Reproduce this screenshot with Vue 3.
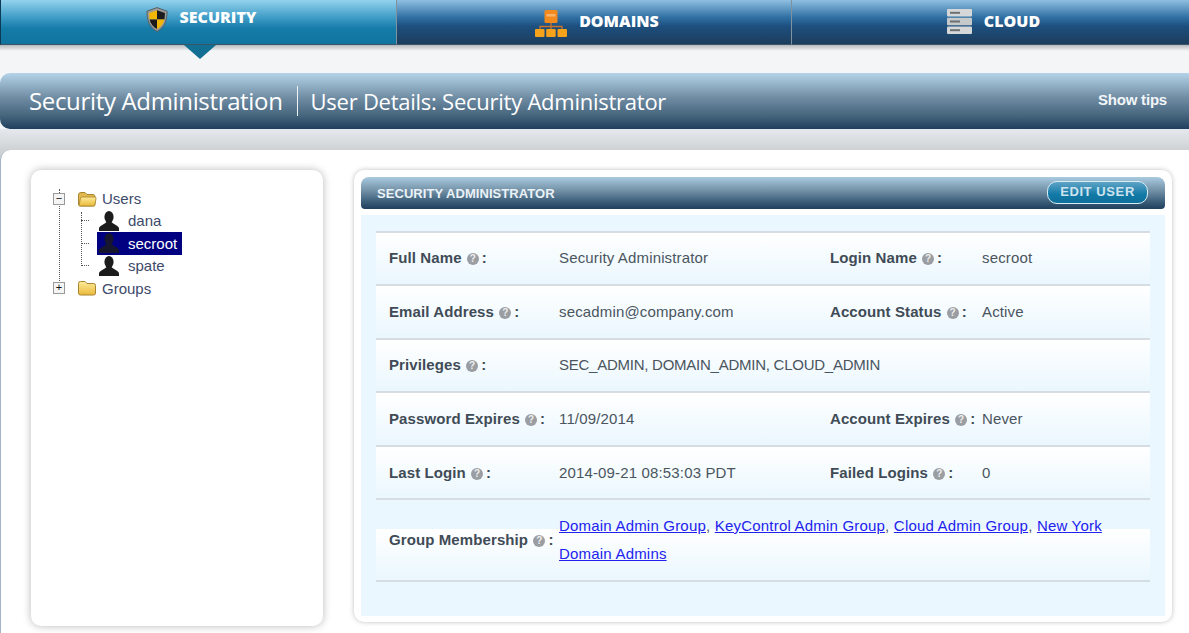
<template>
  <div class="page">
    <div class="tabs">
      <div v-for="tab in tabs" :key="tab.name" class="tab" :class="{ active: tab.active }">
        <svg v-if="tab.name === 'SECURITY'" class="tab-icon shield" viewBox="0 0 24 28">
          <path d="M12 1 L23 5 C23 15 20 23 12 27 C4 23 1 15 1 5 Z" fill="#9a9c9a" stroke="#55585a" stroke-width="1" />
          <path d="M12 4 L12 14 L4 14 C3.500 11 3.400 8.500 3.400 6.800 Z" fill="#f2b705" />
          <path d="M12 4 L20.600 6.800 C20.600 8.500 20.500 11 20 14 L12 14 Z" fill="#1b1b1b" />
          <path d="M4 14 L12 14 L12 24.400 C7.600 22 5 18.500 4 14 Z" fill="#1b1b1b" />
          <path d="M12 14 L20 14 C19 18.500 16.400 22 12 24.400 Z" fill="#f2b705" />
        </svg>
        <svg v-else-if="tab.name === 'DOMAINS'" class="tab-icon domains" viewBox="0 0 32 27">
          <rect x="9.500" y="0" width="13" height="13" rx="1.500" fill="#f28a1e" />
          <rect x="11.500" y="4" width="9" height="2.500" fill="#f9b26a" />
          <path d="M16 13 V19 M5 20 V16.500 H27 V20" fill="none" stroke="#c9742c" stroke-width="1.300" />
          <rect x="0" y="19" width="9.500" height="8" rx="1" fill="#f7a21b" />
          <rect x="11.200" y="19" width="9.500" height="8" rx="1" fill="#f7a21b" />
          <rect x="22.500" y="19" width="9.500" height="8" rx="1" fill="#f7a21b" />
        </svg>
        <svg v-else class="tab-icon cloud" viewBox="0 0 25 25">
          <rect x="0" y="0" width="25" height="7.500" rx="1" fill="#d5d7d8" />
          <rect x="0" y="8.800" width="25" height="7.500" rx="1" fill="#c6c9ca" />
          <rect x="0" y="17.500" width="25" height="7.500" rx="1" fill="#d5d7d8" />
          <rect x="3" y="2.800" width="10" height="2" fill="#6d7072" />
          <rect x="3" y="11.500" width="10" height="2" fill="#6d7072" />
          <rect x="3" y="20.200" width="10" height="2" fill="#6d7072" />
        </svg>
        <span class="tab-name">{{ tab.name }}</span>
      </div>
    </div>
    <div class="strip">
      <div class="arrow"></div>
    </div>

    <div class="title-bar">
      <span class="title">Security Administration</span>
      <span class="subtitle">User Details: Security Administrator</span>
      <span class="tips">Show tips</span>
    </div>
    <div class="shade-wrap">
      <div class="title-shade"></div>
      <div class="main">
        <div class="tree-panel">
          <div class="tree">
            <div class="tree-row">
              <span class="toggle">−</span>
              <svg class="folder" viewBox="0 0 20 16">
                <defs>
                  <linearGradient id="folderFill" x1="0" y1="0" x2="0" y2="1">
                    <stop offset="0" stop-color="#fdeb9a" />
                    <stop offset="1" stop-color="#eab93a" />
                  </linearGradient>
                </defs>
                <path d="M1.500 4 Q1.500 1.500 4 1.500 H8 L10 3.500 H16 Q18 3.500 18 6 V13 Q18 15 16 15 H4 Q1.500 15 1.500 13 Z" fill="#e2b94f" stroke="#a8842f" />
                <path d="M2 15 L3.500 7 Q3.800 6 5 6 H18 Q19.500 6 19 8 L17.500 15 Z" fill="url(#folderFill)" stroke="#a8842f" stroke-width="0.800" />
              </svg>
              <span class="node-label">Users</span>
            </div>
            <div class="children">
              <div v-for="user in users" :key="user" class="user-row">
                <span class="dash"></span>
                <span class="user-node" :class="{ selected: user === 'secroot' }">
                  <svg class="user-icon" viewBox="0 0 20 20">
                    <ellipse cx="10" cy="6" rx="4.600" ry="6" fill="#1c1c1c" />
                    <path d="M0 20 V17.500 C0 14.500 5 14 7.500 11 H12.500 C15 14 20 14.500 20 17.500 V20 Z" fill="#1c1c1c" />
                  </svg>
                  <span class="user-name">{{ user }}</span>
                </span>
              </div>
            </div>
            <div class="tree-row">
              <span class="toggle">+</span>
              <svg class="folder" viewBox="0 0 20 16">
                <path d="M1.500 3.500 Q1.500 1.500 3.500 1.500 H8 L10 3.500 H16.500 Q18.500 3.500 18.500 5.500 V13 Q18.500 15 16.500 15 H3.500 Q1.500 15 1.500 13 Z" fill="url(#folderFill)" stroke="#a8842f" />
              </svg>
              <span class="node-label">Groups</span>
            </div>
          </div>
        </div>

        <div class="details-panel">
          <div class="details-head">
            <span class="details-title">SECURITY ADMINISTRATOR</span>
            <button class="edit-btn">EDIT USER</button>
          </div>
          <div class="details-body">
            <div v-for="row in rows" :key="row[0].label" class="row">
              <template v-for="cell in row" :key="cell.label">
                <div class="label" :class="cell.side">{{ cell.label }} <span class="help">?</span>:</div>
                <div class="value" :class="[cell.side, { caps: cell.caps }]">{{ cell.value }}</div>
              </template>
            </div>
            <div class="row group-row">
              <div class="label left">Group Membership <span class="help">?</span>:</div>
              <div class="value links">
                <div v-for="(line, n) in groupLines" :key="n" class="link-line">
                  <template v-for="(g, i) in line" :key="g">
                    <a href="#">{{ g }}</a>{{ i < line.length - 1 ? ', ' : '' }}
                  </template>
                </div>
              </div>
            </div>
          </div>
        </div>
      </div>
    </div>
  </div>
</template>

<script setup>
const tabs = [
  { name: 'SECURITY', active: true },
  { name: 'DOMAINS' },
  { name: 'CLOUD' }
];

const users = ['dana', 'secroot', 'spate'];

const rows = [
  [
    { label: 'Full Name', value: 'Security Administrator', side: 'left' },
    { label: 'Login Name', value: 'secroot', side: 'right' }
  ],
  [
    { label: 'Email Address', value: 'secadmin@company.com', side: 'left' },
    { label: 'Account Status', value: 'Active', side: 'right' }
  ],
  [
    { label: 'Privileges', value: 'SEC_ADMIN, DOMAIN_ADMIN, CLOUD_ADMIN', side: 'left', caps: true }
  ],
  [
    { label: 'Password Expires', value: '11/09/2014', side: 'left' },
    { label: 'Account Expires', value: 'Never', side: 'right' }
  ],
  [
    { label: 'Last Login', value: '2014-09-21 08:53:03 PDT', side: 'left' },
    { label: 'Failed Logins', value: '0', side: 'right' }
  ]
];

// the last group wraps after "New York"
const groupLines = [
  ['Domain Admin Group', 'KeyControl Admin Group', 'Cloud Admin Group', 'New York'],
  ['Domain Admins']
];
</script>

<style>
html, body {
  margin: 0;
  background: #fff;
  overflow: hidden;
}
</style>

<style scoped>
.page {
  width: 1189px;
  height: 633px;
  overflow: hidden;
  background: #f3f5f7;
  font-family: "Liberation Sans", Arial, sans-serif;
  color: #4a5560;
}

.tabs {
  display: grid;
  grid-template-columns: 396px 395px 398px;
  height: 45px;
}

.tab {
  display: flex;
  align-items: center;
  justify-content: center;
  gap: 12px;
  box-sizing: border-box;
  height: 45px;
  padding: 0 0 2px 6px;
  background: linear-gradient(#8fbfe0, #2f6fa3 40%, #1d4f7e 60%, #1d3d5c);
  border-left: 1px solid #7f929f;
  border-bottom: 1px solid #3a5468;
}

.tab.active {
  background: linear-gradient(#93d2ee, #3f9cc6 40%, #157ba8 65%, #11749f);
  border-left: 1px solid #0c3c55;
  padding: 0 0 11px 5px;
}

.tab-icon {
  flex: none;
}

.shield { width: 22px; height: 27px; margin-top: 5px; }
.domains { width: 32px; height: 27px; margin-top: 5px; }
.cloud { width: 25px; height: 25px; }

.tab-name {
  color: #fff;
  font-size: 16px;
  font-weight: 800;
  font-family: "Open Sans", "Liberation Sans", sans-serif;
}

.strip {
  height: 28px;
  background: linear-gradient(#b6b9bb, #f3f5f7 6px);
  position: relative;
}

.arrow {
  position: absolute;
  left: 184px;
  top: 0;
  width: 0;
  height: 0;
  border-left: 16px solid transparent;
  border-right: 16px solid transparent;
  border-top: 14px solid #106f92;
}

.title-bar {
  display: flex;
  align-items: center;
  height: 56px;
  padding-left: 29px;
  padding-right: 22px;
  border-radius: 10px 0 0 10px;
  background: linear-gradient(#b4d3e8, #6e8ba2 45%, #47677f 75%, #1f3f5e);
}

.title {
  color: #fff;
  font-size: 24px;
  font-family: "Open Sans", "Liberation Sans", sans-serif;
  letter-spacing: -0.34px;
  padding-right: 14px;
  border-right: 1px solid #eef3f6;
  line-height: 30px;
}

.subtitle {
  color: #fff;
  font-size: 22px;
  font-family: "Open Sans", "Liberation Sans", sans-serif;
  letter-spacing: -0.25px;
  padding-left: 13px;
}

.tips {
  margin-left: auto;
  color: #f2f6f9;
  font-size: 15px;
  font-weight: bold;
  letter-spacing: -0.2px;
  padding-bottom: 3px;
}

.shade-wrap {
  background: #cfd2d5;
}

.title-shade {
  height: 21px;
  background: linear-gradient(#e5e9ed, #cfd2d5);
}

.main {
  display: flex;
  align-items: flex-start;
  gap: 31px;
  height: 483px;
  padding: 20px 0 0 30px;
  box-sizing: border-box;
  background: #fff;
  border-top-left-radius: 10px;
  border-left: 1px solid #a5b4c4;
}

.tree-panel {
  box-sizing: border-box;
  flex: none;
  width: 292px;
  height: 456px;
  padding: 17.5px 0 0 20px;
  border-radius: 10px;
  background: #fff;
  box-shadow: 0 0 8px rgba(0, 0, 0, 0.28);
}

.tree {
  position: relative;
  font-size: 15px;
  color: #3d4a6a;
}

.tree::before {
  content: '';
  position: absolute;
  left: 8px;
  top: 1px;
  bottom: 14px;
  border-left: 1px dotted #555;
}

.tree-row {
  display: flex;
  align-items: center;
  height: 22px;
}

.toggle {
  position: relative;
  z-index: 1;
  box-sizing: border-box;
  width: 12px;
  height: 12px;
  margin-left: 2px;
  border: 1px solid #999;
  background: #f4f4f4;
  color: #111;
  font-size: 11px;
  line-height: 9px;
  text-align: center;
}

.folder {
  width: 20px;
  height: 16px;
  margin-left: 12px;
  margin-right: 5px;
}

.children {
  position: relative;
  margin-left: 28px;
}

.children::before {
  content: '';
  position: absolute;
  left: 2px;
  top: 2px;
  bottom: 11px;
  border-left: 1px dotted #555;
}

.user-row {
  display: flex;
  align-items: center;
  height: 22.5px;
}

.dash {
  width: 8px;
  margin-left: 2px;
  margin-right: 8px;
  border-top: 1px dotted #555;
}

.user-node {
  display: flex;
  align-items: center;
  width: 85px;
  height: 23px;
}

.user-node.selected {
  background: #000080;
  color: #fff;
}

.user-icon {
  width: 20px;
  height: 20px;
  margin-left: 2px;
  margin-right: 9px;
}

.selected .user-icon {
  opacity: 0.8;
}

.details-panel {
  box-sizing: border-box;
  flex: none;
  width: 818px;
  height: 452px;
  padding: 7px 7px 6px;
  border-radius: 10px;
  background: #fff;
  box-shadow: 0 0 5px rgba(0, 0, 0, 0.25);
}

.details-head {
  display: flex;
  align-items: center;
  justify-content: space-between;
  height: 32px;
  padding: 0 17px 0 16px;
  border-radius: 8px 8px 4px 4px;
  background: linear-gradient(#a9cbe0, #6f8da3 45%, #3f617c 75%, #1f3f5e);
}

.details-title {
  color: #eaf2f7;
  font-size: 13px;
  font-weight: bold;
  letter-spacing: 0.05px;
}

.edit-btn {
  width: 101px;
  height: 23px;
  margin-bottom: 1px;
  padding: 0 0 3px;
  border: 1.5px solid #d7edf6;
  border-radius: 10px;
  background: linear-gradient(#5fa4c6, #1179a6 60%, #0f6f9b);
  color: #cfe3ee;
  font-family: inherit;
  font-size: 13px;
  font-weight: bold;
  letter-spacing: 0.6px;
}

.details-body {
  box-sizing: border-box;
  height: 401px;
  margin-top: 6px;
  padding: 15.5px 15px 0;
  background: #eaf7fe;
}

.row {
  display: flex;
  align-items: center;
  box-sizing: border-box;
  height: 53.6px;
  padding-bottom: 1px;
  font-size: 15px;
  border-top: 2px solid #d5dde2;
  background: linear-gradient(#fff, #eaf7fe);
}

.label {
  box-sizing: border-box;
  flex: none;
  font-weight: bold;
  padding-left: 13px;
  letter-spacing: 0.1px;
  color: #404b56;
}

.label.left { width: 183px; }
.label.right { width: 152px; padding-left: 0; }

.value {
  letter-spacing: 0.15px;
}

.value.caps {
  letter-spacing: -0.25px;
}

.value.left { width: 271px; flex: none; }
.value.left:last-child { width: auto; }

.help {
  display: inline-block;
  width: 12px;
  height: 12px;
  margin: 0 3px 0 1px;
  border-radius: 50%;
  background: #9a9ea2;
  color: #eee;
  font-size: 10px;
  line-height: 12px;
  text-align: center;
  vertical-align: 1px;
}

.row.group-row {
  height: 84px;
  background: linear-gradient(#eaf7fe 29px, #fff 29px, #eaf7fe);
  border-bottom: 2px solid #d5dde2;
}

.links {
  line-height: 28px;
  letter-spacing: 0.2px;
}

.link-line {
  white-space: nowrap;
}

.links a {
  color: #2222ee;
}
</style>
